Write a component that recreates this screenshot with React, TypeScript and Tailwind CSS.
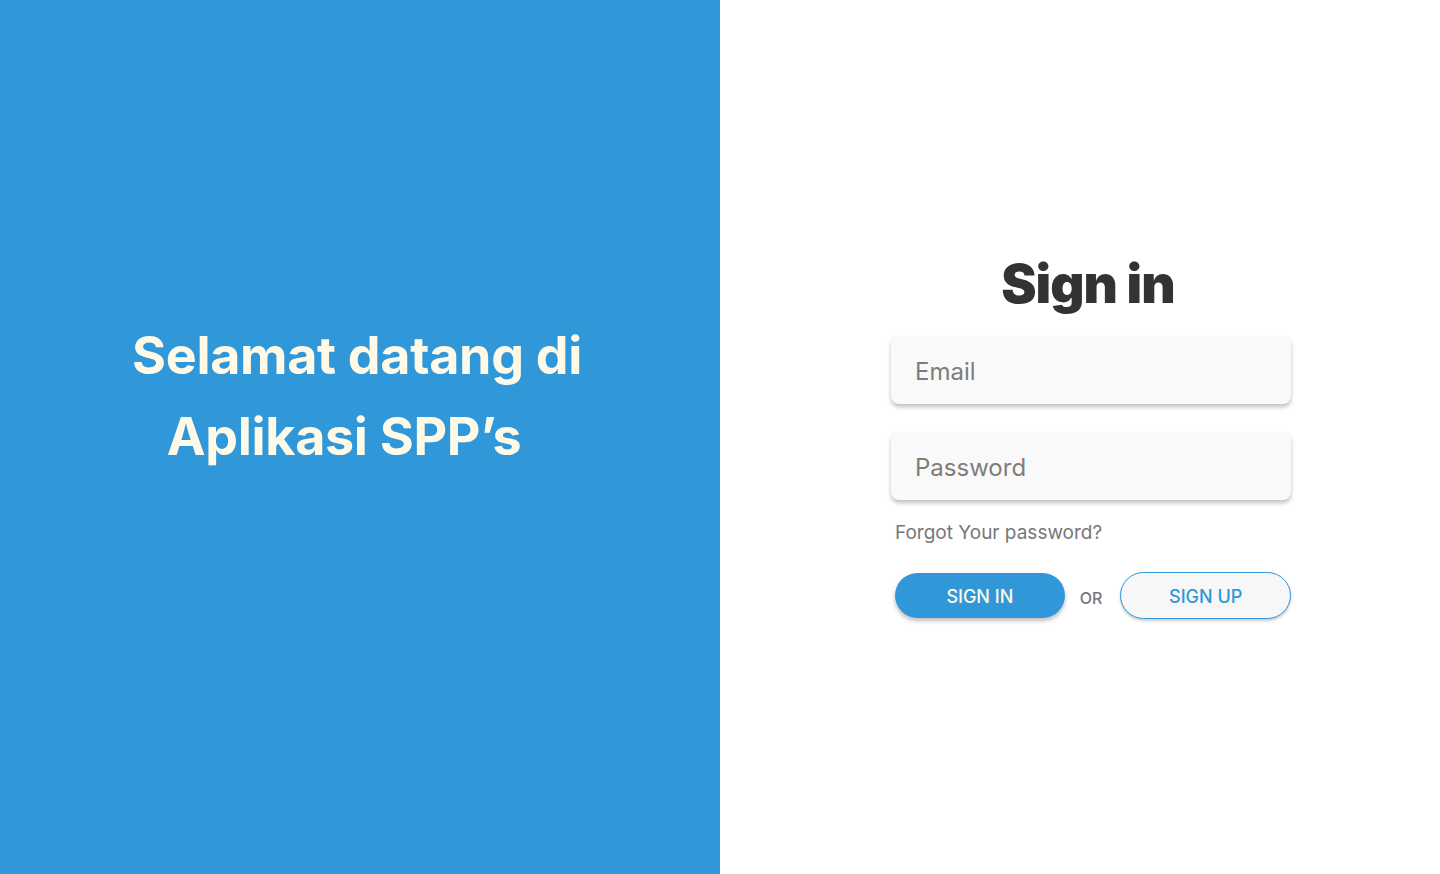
export default function App() {
  return (
    <div className="flex h-[874px] w-full font-['Inter',sans-serif]">
      <div className="flex w-[720px] shrink-0 items-center justify-center bg-[#3098d9] pb-[82px] pr-[6px]">
        <h1 className="text-center text-[52px] font-bold leading-[81px] tracking-[-0.3px] text-[#fff9e8]">
          Selamat datang di
          <br />
          <span className="pr-[26px]">Aplikasi SPP’s</span>
        </h1>
      </div>

      <div className="flex flex-1 items-start justify-center bg-white pt-[250px]">
        <div className="ml-[22px] flex w-[400px] flex-col">
          <h2 className="pr-[6px] text-center text-[53px] font-black leading-[68px] tracking-[-1px] text-[#333333]">
            Sign in
          </h2>

          <input
            type="email"
            placeholder="Email"
            className="mt-[18px] h-[68px] w-full rounded-lg bg-[#f9f9f9] px-6 pt-[3px] text-[24px] text-[#333] shadow-[0_3px_4px_rgba(0,0,0,0.25)] outline-none placeholder:text-[#7d7d7d]"
          />
          <input
            type="password"
            placeholder="Password"
            className="mt-[28px] h-[68px] w-full rounded-lg bg-[#f9f9f9] px-6 pt-[3px] text-[24px] text-[#333] shadow-[0_3px_4px_rgba(0,0,0,0.25)] outline-none placeholder:text-[#7d7d7d]"
          />

          <a href="#" className="ml-1 mt-[21px] text-[19px] leading-[24px] text-[#777777]">
            Forgot Your password?
          </a>

          <div className="ml-1 mt-[27px] flex items-center">
            <button className="h-[45px] w-[170px] rounded-full bg-[#3098d9] pt-[2px] text-[18px] font-medium text-[#fff9e8] shadow-[0_3px_4px_rgba(0,0,0,0.25)]">
              SIGN IN
            </button>
            <span className="ml-[15px] mr-[18px] mt-[4px] text-[16px] font-medium text-[#777777]">OR</span>
            <button className="h-[47px] w-[171px] rounded-full border border-[#3098d9] bg-[#f7f7f7] pt-[2px] text-[18px] font-medium text-[#3098d9] shadow-[0_2px_3px_rgba(0,0,0,0.2)]">
              SIGN UP
            </button>
          </div>
        </div>
      </div>
    </div>
  )
}
